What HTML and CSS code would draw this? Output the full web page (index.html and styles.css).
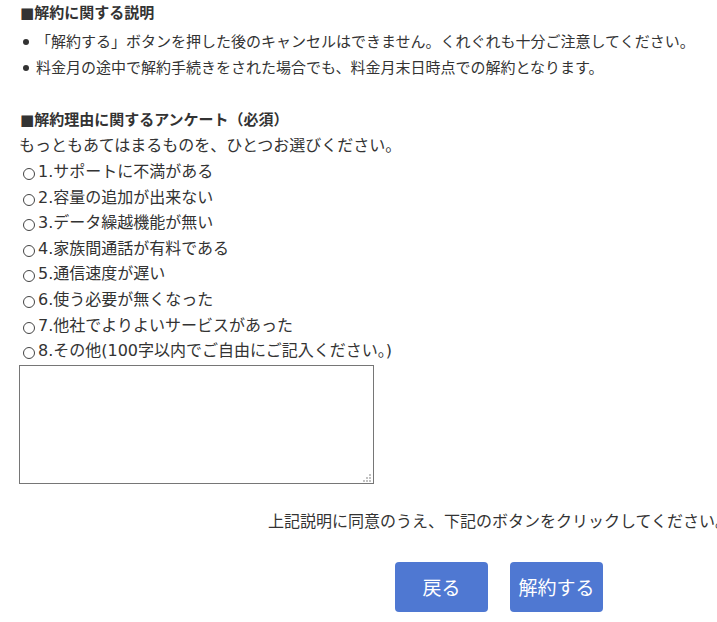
FILE: index.html
```html
<!DOCTYPE html>
<html lang="ja">
<head>
    <meta charset="UTF-8">
    <meta name="viewport" content="width=device-width, initial-scale=1.0">
    <title>解約手続き</title>
    <link rel="stylesheet" href="styles.css">
</head>
<body>
    <div class="container">
        <!-- 解約に関する説明 -->
        <h2 class="section-title">■解約に関する説明</h2>
        <ul class="notes">
            <li>「解約する」ボタンを押した後のキャンセルはできません。くれぐれも十分ご注意してください。</li>
            <li>料金月の途中で解約手続きをされた場合でも、料金月末日時点での解約となります。</li>
        </ul>

        <!-- アンケート -->
        <h2 class="section-title survey-title">■解約理由に関するアンケート（必須）</h2>
        <p class="lead">もっともあてはまるものを、ひとつお選びください。</p>
        <div class="reasons">
            <label class="reason"><input type="radio" name="reason" value="1">1.サポートに不満がある</label>
            <label class="reason"><input type="radio" name="reason" value="2">2.容量の追加が出来ない</label>
            <label class="reason"><input type="radio" name="reason" value="3">3.データ繰越機能が無い</label>
            <label class="reason"><input type="radio" name="reason" value="4">4.家族間通話が有料である</label>
            <label class="reason"><input type="radio" name="reason" value="5">5.通信速度が遅い</label>
            <label class="reason"><input type="radio" name="reason" value="6">6.使う必要が無くなった</label>
            <label class="reason"><input type="radio" name="reason" value="7">7.他社でよりよいサービスがあった</label>
            <label class="reason"><input type="radio" name="reason" value="8">8.その他(100字以内でご自由にご記入ください。)</label>
        </div>
        <textarea class="other-text" maxlength="100"></textarea>

        <p class="agree">上記説明に同意のうえ、下記のボタンをクリックしてください。</p>
        <div class="actions">
            <button class="btn" type="button">戻る</button>
            <button class="btn" type="button">解約する</button>
        </div>
    </div>
</body>
</html>
```

FILE: styles.css
```css
html, body {
    margin: 0;
    padding: 0;
    overflow: hidden;
    background: #fff;
}
.container {
    padding-left: 19px;
    color: #333;
    font-family: "DejaVu Sans", "Noto Sans CJK JP", sans-serif;
    font-size: 16px;
}
.section-title {
    margin: 0;
    padding-left: 1px;
    font-size: 15px;
    font-weight: bold;
    line-height: 26px;
}
.notes {
    list-style: none;
    margin: 3px 0 0;
    padding: 0;
    font-size: 15px;
    line-height: 26px;
}
.notes li {
    position: relative;
    padding-left: 17px;
    white-space: nowrap;
}
.notes li::before {
    content: "";
    position: absolute;
    left: 4px;
    top: 10px;
    width: 6px;
    height: 6px;
    border-radius: 50%;
    background: #333;
}
.survey-title {
    margin-top: 26px;
}
.lead {
    margin: 0;
    line-height: 26px;
}
.reasons {
    line-height: 25.6px;
}
.reason {
    display: block;
    white-space: nowrap;
}
.reason input {
    appearance: none;
    -webkit-appearance: none;
    display: inline-block;
    width: 12px;
    height: 12px;
    margin: 0 3px 0 4px;
    border: 1px solid #444;
    border-radius: 50%;
    box-sizing: border-box;
    vertical-align: -3px;
    background: #fff;
}
.other-text {
    display: block;
    width: 355px;
    height: 119px;
    margin: 1px 0 0;
    box-sizing: border-box;
    border: 1px solid #767676;
    font-family: inherit;
    resize: none;
    /* grip dots in the corner */
    background-color: #fff;
    background-image:
        linear-gradient(#c2c2c2, #c2c2c2),
        linear-gradient(#c2c2c2, #c2c2c2),
        linear-gradient(#c2c2c2, #c2c2c2),
        linear-gradient(#c2c2c2, #c2c2c2),
        linear-gradient(#c2c2c2, #c2c2c2),
        linear-gradient(#c2c2c2, #c2c2c2);
    background-size: 2px 2px;
    background-repeat: no-repeat;
    background-position:
        right 2px bottom 7px,
        right 2px bottom 4px,
        right 5px bottom 4px,
        right 2px bottom 1px,
        right 5px bottom 1px,
        right 8px bottom 1px;
}
.agree {
    margin: 25px 0 0;
    padding-left: 249px;
    white-space: nowrap;
    font-size: 16px;
    line-height: 26px;
}
.actions {
    display: flex;
    gap: 22px;
    margin-top: 27px;
    padding-left: 376px;
}
.btn {
    width: 93px;
    height: 50px;
    padding: 0;
    border: none;
    border-radius: 4px;
    background-color: #4f78d2;
    color: #fff;
    font-family: inherit;
    font-size: 19px;
    cursor: pointer;
}
```
